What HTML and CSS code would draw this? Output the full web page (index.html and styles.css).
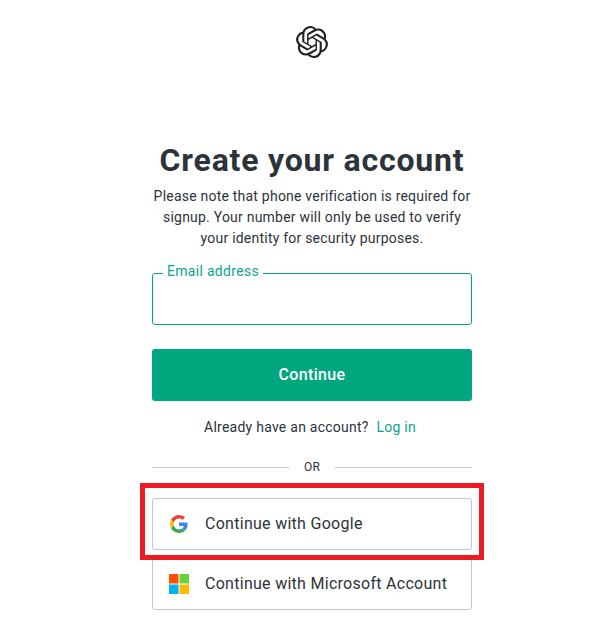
FILE: index.html
```html
<!DOCTYPE html>
<html lang="en">
<head>
    <meta charset="UTF-8">
    <meta name="viewport" content="width=device-width, initial-scale=1.0">
    <title>Create your account</title>
    <link rel="stylesheet" href="styles.css">
</head>
<body>
    <div class="page">
        <header class="logo">
            <svg viewBox="0 0 24 24" width="32" height="32" fill="#202123">
                <path d="M22.2819 9.8211a5.9847 5.9847 0 0 0-.5157-4.9108 6.0462 6.0462 0 0 0-6.5098-2.9A6.0651 6.0651 0 0 0 4.9807 4.1818a5.9847 5.9847 0 0 0-3.9977 2.9 6.0462 6.0462 0 0 0 .7427 7.0966 5.98 5.98 0 0 0 .511 4.9107 6.051 6.051 0 0 0 6.5146 2.9001A5.9847 5.9847 0 0 0 13.2599 24a6.0557 6.0557 0 0 0 5.7718-4.2058 5.9894 5.9894 0 0 0 3.9977-2.9001 6.0557 6.0557 0 0 0-.7475-7.0729zm-9.022 12.6081a4.4755 4.4755 0 0 1-2.8764-1.0408l.1419-.0804 4.7783-2.7582a.7948.7948 0 0 0 .3927-.6813v-6.7369l2.02 1.1686a.071.071 0 0 1 .038.052v5.5826a4.504 4.504 0 0 1-4.4945 4.4944zm-9.6607-4.1254a4.4708 4.4708 0 0 1-.5346-3.0137l.142.0852 4.783 2.7582a.7712.7712 0 0 0 .7806 0l5.8428-3.3685v2.3324a.0804.0804 0 0 1-.0332.0615L9.74 19.9502a4.4992 4.4992 0 0 1-6.1408-1.6464zM2.3408 7.8956a4.485 4.485 0 0 1 2.3655-1.9728V11.6a.7664.7664 0 0 0 .3879.6765l5.8144 3.3543-2.0201 1.1685a.0757.0757 0 0 1-.071 0l-4.8303-2.7865A4.504 4.504 0 0 1 2.3408 7.872zm16.5963 3.8558L13.1038 8.364 15.1192 7.2a.0757.0757 0 0 1 .071 0l4.8303 2.7913a4.4944 4.4944 0 0 1-.6765 8.1042v-5.6772a.79.79 0 0 0-.407-.667zm2.0107-3.0231l-.142-.0852-4.7735-2.7818a.7759.7759 0 0 0-.7854 0L9.409 9.2297V6.8974a.0662.0662 0 0 1 .0284-.0615l4.8303-2.7866a4.4992 4.4992 0 0 1 6.6802 4.66zM8.3065 12.863l-2.02-1.1638a.0804.0804 0 0 1-.038-.0567V6.0742a4.4992 4.4992 0 0 1 7.3757-3.4537l-.142.0805L8.704 5.459a.7948.7948 0 0 0-.3927.6813zm1.0976-2.3654l2.602-1.4998 2.6069 1.4998v2.9994l-2.5974 1.4997-2.6067-1.4997Z"/>
            </svg>
        </header>

        <main class="signup">
            <h1>Create your account</h1>
            <p class="note">Please note that phone verification is required for signup. Your number will only be used to verify your identity for security purposes.</p>

            <div class="field">
                <label for="email">Email address</label>
                <input type="text" id="email">
            </div>

            <button class="continue">Continue</button>

            <p class="login">Already have an account? <a href="#">Log in</a></p>

            <div class="divider"><span>OR</span></div>

            <div class="social-wrap">
                <button class="social">
                    <svg class="social-icon" viewBox="0 0 48 48" width="18" height="18">
                        <path fill="#EA4335" d="M24 9.5c3.54 0 6.71 1.22 9.21 3.6l6.85-6.85C35.9 2.38 30.47 0 24 0 14.62 0 6.51 5.38 2.56 13.22l7.98 6.19C12.43 13.72 17.74 9.5 24 9.5z"/>
                        <path fill="#4285F4" d="M46.98 24.55c0-1.57-.15-3.09-.38-4.55H24v9.02h12.94c-.58 2.96-2.26 5.48-4.78 7.18l7.73 6c4.51-4.18 7.09-10.36 7.09-17.65z"/>
                        <path fill="#FBBC05" d="M10.53 28.59c-.48-1.45-.76-2.99-.76-4.59s.27-3.14.76-4.59l-7.98-6.19C.92 16.46 0 20.12 0 24c0 3.88.92 7.54 2.56 10.78l7.97-6.19z"/>
                        <path fill="#34A853" d="M24 48c6.48 0 11.93-2.13 15.89-5.81l-7.73-6c-2.15 1.45-4.92 2.3-8.16 2.3-6.26 0-11.57-4.22-13.47-9.91l-7.98 6.19C6.51 42.62 14.62 48 24 48z"/>
                    </svg>
                    Continue with Google
                </button>
                <div class="highlight"></div>
            </div>

            <button class="social">
                <svg class="social-icon" viewBox="0 0 21 21" width="20" height="20">
                    <rect x="0" y="0" width="10" height="10" fill="#ff5000"/>
                    <rect x="11" y="0" width="10" height="10" fill="#66d13c"/>
                    <rect x="0" y="11" width="10" height="10" fill="#00b2f0"/>
                    <rect x="11" y="11" width="10" height="10" fill="#ffb900"/>
                </svg>
                Continue with Microsoft Account
            </button>
        </main>
    </div>
</body>
</html>
```

FILE: styles.css
```css
* {
    margin: 0;
    padding: 0;
    box-sizing: border-box;
    font-family: Roboto, "Liberation Sans", sans-serif;
}

body {
    background: #fff;
    color: #2d333a;
}

.page {
    display: flex;
    flex-direction: column;
    align-items: center;
    padding: 26px 0 19px 9px;
}

.logo {
    height: 32px;
}

.signup {
    width: 320px;
    margin-top: 82px;
    display: flex;
    flex-direction: column;
}

h1 {
    font-size: 32px;
    line-height: 40px;
    font-weight: 700;
    text-align: center;
    letter-spacing: 0.8px;
}

.note {
    margin-top: 6px;
    font-size: 14px;
    line-height: 21px;
    text-align: center;
    letter-spacing: 0.22px;
}

.field {
    position: relative;
    margin-top: 24px;
}

.field label {
    position: absolute;
    top: -11px;
    left: 11px;
    padding: 0 4px;
    background: #fff;
    color: #0ea58c;
    font-size: 14px;
    line-height: 18px;
    letter-spacing: 0.3px;
}

#email {
    display: block;
    width: 100%;
    height: 52px;
    border: 1px solid #00a67e;
    border-radius: 3px;
    outline: none;
}

.continue {
    height: 52px;
    margin-top: 24px;
    padding-bottom: 2px;
    border: none;
    border-radius: 3px;
    background: #00a67e;
    color: #fff;
    font-size: 16px;
    font-weight: 500;
    letter-spacing: 0.35px;
}

.login {
    margin-top: 16px;
    padding-right: 4px;
    font-size: 14px;
    line-height: 20px;
    text-align: center;
    letter-spacing: 0.25px;
}

.login a {
    margin-left: 4px;
    color: #0ea58c;
    text-decoration: none;
}

.divider {
    display: flex;
    align-items: center;
    gap: 15px;
    margin-top: 20px;
    font-size: 12px;
    line-height: 20px;
    letter-spacing: 0.3px;
}

.divider::before,
.divider::after {
    content: "";
    flex: 1;
    height: 1px;
    background: #c2c8d0;
}

.social-wrap {
    position: relative;
    margin-top: 21px;
    display: flex;
    flex-direction: column;
}

.social {
    display: flex;
    align-items: center;
    height: 52px;
    padding: 0 0 1px 16px;
    border: 1px solid #c2c8d0;
    border-radius: 3px;
    background: #fff;
    color: #2d333a;
    font-size: 16px;
    letter-spacing: 0.28px;
    text-align: left;
}

.social-wrap + .social {
    margin-top: 8px;
}

.social-icon {
    width: 20px;
    margin-right: 16px;
    flex-shrink: 0;
}

.highlight {
    position: absolute;
    top: -15px;
    left: -12px;
    right: -12px;
    bottom: -10px;
    border: 5px solid #ed1c24;
}
```
